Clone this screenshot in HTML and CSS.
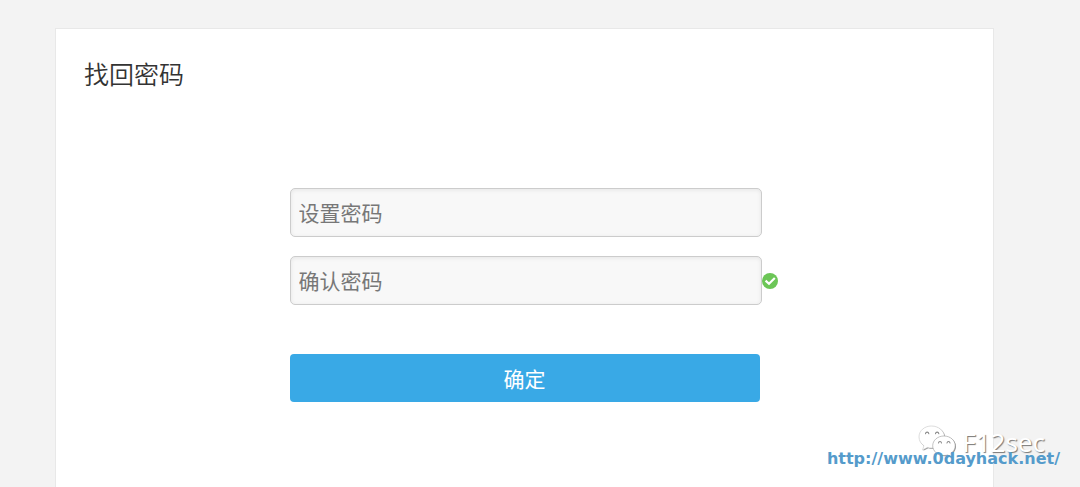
FILE: index.html
```html
<!DOCTYPE html>
<html lang="zh-CN">
<head>
    <meta charset="UTF-8">
    <meta name="viewport" content="width=device-width, initial-scale=1.0">
    <title>找回密码</title>
    <link rel="stylesheet" href="styles.css">
</head>
<body>
    <main class="card">
        <h1 class="card-title">找回密码</h1>

        <form class="reset-form">
            <div class="field">
                <input type="password" id="password" class="field-input" placeholder="设置密码" aria-label="设置密码">
            </div>
            <div class="field">
                <input type="password" id="confirm" class="field-input" placeholder="确认密码" aria-label="确认密码">
                <svg class="field-ok" viewBox="0 0 16 16" aria-hidden="true">
                    <circle cx="8" cy="8" r="8" fill="#6cc657"/>
                    <path d="M3.6 7.6L7 10.8L12.8 5" fill="none" stroke="#fff" stroke-width="2.2"/>
                </svg>
            </div>
            <button type="submit" class="submit-button">确定</button>
        </form>
    </main>

    <div class="watermark">
        <div class="account">
            <svg class="account-logo" viewBox="0 0 38 34" aria-hidden="true">
                <g fill="#999" transform="translate(0.8 0.8)">
                    <path d="M13.500 1C6.300 1 1 5.800 1 12c0 3.700 1.900 6.700 4.900 8.700L4.600 25l4.900-2.600c1.300.4 2.600.6 4 .6C20.700 23 26.500 18 26.500 12S20.700 1 13.500 1z"/>
                    <path d="M26 11c-6.300 0-11.300 4.300-11.300 9.700S19.700 30.500 26 30.500c1.300 0 2.600-.2 3.800-.5l4.300 2.300-1.200-3.800c2.700-1.900 4.300-4.600 4.300-7.800C37.200 15.300 32.300 11 26 11z"/>
                </g>
                <g fill="#fff" stroke="#bbb" stroke-width="0.5" stroke-linejoin="round">
                    <path d="M13.500 1C6.300 1 1 5.800 1 12c0 3.700 1.900 6.700 4.900 8.700L4.600 25l4.900-2.600c1.300.4 2.600.6 4 .6C20.700 23 26.500 18 26.500 12S20.700 1 13.500 1z"/>
                    <path stroke="#888" d="M26 11c-6.300 0-11.300 4.300-11.300 9.700S19.700 30.500 26 30.500c1.300 0 2.600-.2 3.800-.5l4.300 2.300-1.200-3.800c2.700-1.900 4.300-4.600 4.300-7.800C37.200 15.300 32.300 11 26 11z"/>
                </g>
                <g fill="none" stroke="#888" stroke-width="1.1" stroke-linecap="round">
                    <path d="M7.500 8.800c.3-2.200 3-2.200 3.300 0M17.500 8.800c.3-2.200 3-2.200 3.300 0"/>
                    <path d="M20.500 18c.3-2 2.700-2 3 0M29 18c.3-2 2.700-2 3 0"/>
                </g>
            </svg>
            <span class="account-name">F12sec</span>
        </div>
        <a class="site-link" href="http://www.0dayhack.net/">http://www.0dayhack.net/</a>
    </div>
</body>
</html>
```

FILE: styles.css
```css
* {
    margin: 0;
    padding: 0;
    box-sizing: border-box;
}

body {
    font-family: "Noto Sans", "Noto Sans CJK SC", sans-serif;
    background: #f3f3f3;
    color: #333;
    min-height: 100vh;
    display: flex;
    padding: 28px 86px 0 55px;
    position: relative;
}

.card {
    flex: 1;
    background: #fff;
    border: 1px solid #e8e8e8;
    border-bottom: none;
    padding: 28px 26px 28px 28px;
}

.card-title {
    font-size: 25px;
    line-height: 34px;
    font-weight: 350;
}

.reset-form {
    width: 472px;
    max-width: 100%;
    margin: 97px auto 0;
}

.field {
    display: flex;
    align-items: center;
    margin-bottom: 19px;
}

.field-input {
    flex: none;
    width: 100%;
    height: 49px;
    padding: 0 8px;
    font-family: inherit;
    font-size: 21px;
    color: #333;
    background: #f8f8f8;
    border: 1px solid #ccc;
    border-radius: 5px;
    box-shadow: inset 0 1px 4px rgba(0, 0, 0, 0.08);
}

.field-input::placeholder {
    color: #777;
}

.field-ok {
    flex: none;
    width: 16px;
    height: 16px;
}

.submit-button {
    display: block;
    width: 470px;
    max-width: 100%;
    height: 48px;
    margin-top: 49px;
    font-family: inherit;
    font-size: 21px;
    color: #fff;
    background: #39a9e6;
    border: none;
    border-radius: 4px;
    cursor: pointer;
}

/* stamp over the bottom right corner */
.watermark {
    position: absolute;
    right: 20px;
    bottom: 17px;
    display: flex;
    flex-direction: column;
    align-items: flex-end;
}

.account {
    display: flex;
    align-items: center;
    gap: 6px;
    margin-right: 15px;
    margin-bottom: -12px;
}

.account-logo {
    width: 38px;
    height: 34px;
}

.account-name {
    font-size: 26px;
    line-height: 36px;
    color: #fff;
    text-shadow: 1px 1px 1px #777;
}

.site-link {
    position: relative;
    font-family: "DejaVu Sans", sans-serif;
    font-size: 16px;
    font-weight: bold;
    line-height: 22px;
    color: #559bcb;
    text-decoration: none;
}
```
